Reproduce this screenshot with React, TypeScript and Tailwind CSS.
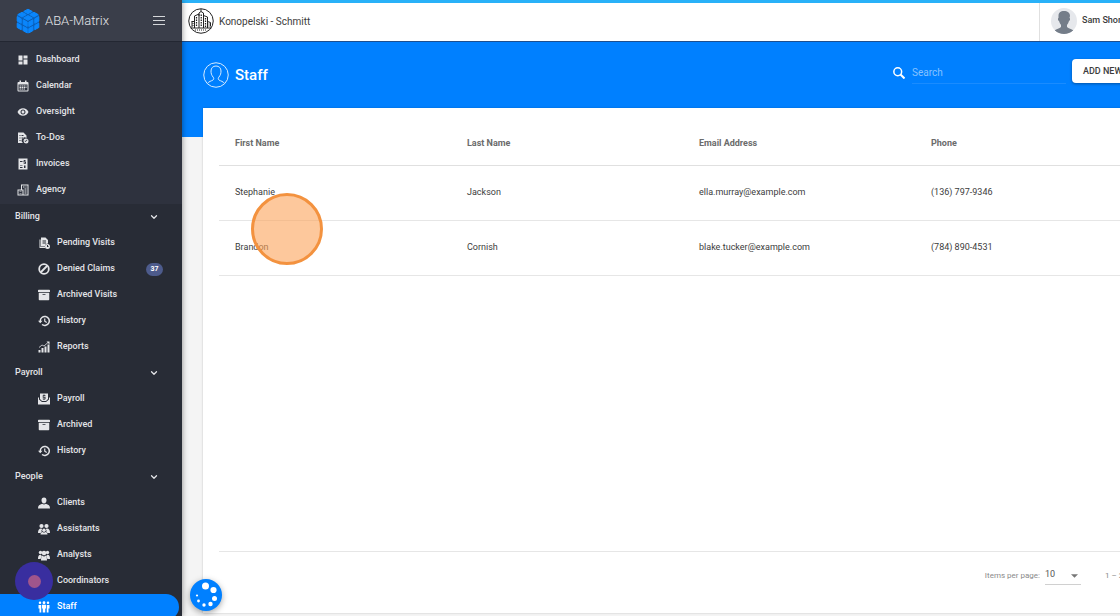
import type { ReactNode } from 'react';
import { useState } from 'react';
import { MdDashboard, MdVisibility } from 'react-icons/md';
import { FaArchive } from 'react-icons/fa';
import { ChevronDown } from 'lucide-react';

function Glyph({ children }: { children: ReactNode }) {
  return (
    <svg viewBox="0 0 24 24" className="size-3" fill="currentColor" aria-hidden="true">
      {children}
    </svg>
  );
}

const CalendarIcon = () => (
  <Glyph>
    <path
      fillRule="evenodd"
      d="M5 1h3v3h8V1h3v3h2a2 2 0 0 1 2 2v15a2 2 0 0 1-2 2H3a2 2 0 0 1-2-2V6a2 2 0 0 1 2-2h2zM3 9v12h18V9z"
    />
    <path d="M5 11h3v2H5zM9 11h3v2H9zM13 11h3v2h-3zM17 11h2v2h-2zM5 14h3v2H5zM9 14h3v2H9zM13 14h3v2h-3zM17 14h2v2h-2zM5 17h3v2H5zM9 17h3v2H9zM13 17h3v2h-3z" />
  </Glyph>
);

const TodoIcon = () => (
  <Glyph>
    <path
      fillRule="evenodd"
      d="M2 1h11l6 6v5a6 6 0 0 0-7 10H2zM5 6v2h2V6zm0 5v2h2v-2zm0 5v2h2v-2zM9 6v2h4V6zm0 5v2h4v-2z"
    />
    <path fillRule="evenodd" d="M18 13a5 5 0 1 1 0 10 5 5 0 0 1 0-10zm-1 7 4-4-1-1-3 3-1-1-1 1z" />
  </Glyph>
);

const InvoiceIcon = () => (
  <Glyph>
    <path
      fillRule="evenodd"
      d="M3 1h18v22H3zM6 6v2h5V6zm8-2v1h-1v4h3v1h-3v1h2v1h2v-1h1V8h-3V7h3V5h-2V4zM6 15v1h5v-1zm0 3v2h5v-2zm8-3v5h3v-5z"
    />
  </Glyph>
);

const AgencyIcon = () => (
  <Glyph>
    <path
      fillRule="evenodd"
      d="M8 1h15v22H1V11h7zM10 3v8h3v10h8V3zM3 13v8h8v-8z"
    />
    <path d="M12 5h3v2h-3zM17 5h2v2h-2zM15 9h4v2h-4zM15 13h4v2h-4zM15 17h4v2h-4zM5 15h4v1H5zM5 18h4v1H5z" />
  </Glyph>
);

const PendingIcon = () => (
  <Glyph>
    <path d="M3 5h2v15h9v2H3z" />
    <path fillRule="evenodd" d="M6 1h9l5 5v7a6 6 0 0 0-6 6H6zM9 7v2h7V7zm0 4v2h7v-2z" />
    <path fillRule="evenodd" d="M19 14a5 5 0 1 1 0 10 5 5 0 0 1 0-10zm-1 2v4h4v-1h-2v-3z" />
  </Glyph>
);

const DeniedIcon = () => (
  <svg viewBox="0 0 24 24" className="size-3" fill="none" stroke="currentColor" strokeWidth="3.6" aria-hidden="true">
    <circle cx="12" cy="12" r="9.6" />
    <path d="M18.5 5.5l-13 13" />
  </svg>
);

const HistoryIcon = () => (
  <svg viewBox="0 0 24 24" className="size-3" fill="none" stroke="currentColor" strokeWidth="3" aria-hidden="true">
    <path d="M4.500 13V12a9 9 0 1 1 3.500 7" />
    <path d="M13.500 7v5.500l4 2.500" strokeWidth="2.400" />
    <path d="M0 11.500h9L4.500 16.500z" fill="currentColor" stroke="none" />
  </svg>
);

const ReportsIcon = () => (
  <Glyph>
    <path d="M1 18h4v5H1zM7 14h4v9H7zM13 11h4v12h-4zM19 7h4v16h-4z" />
    <path d="M2 13l6-5 4 2 8-7" fill="none" stroke="currentColor" strokeWidth="1.6" />
    <path d="M17 1h6v6z" />
  </Glyph>
);

const PayrollIcon = () => (
  <Glyph>
    <path
      fillRule="evenodd"
      d="M4 1h16v11l-4 4H8l-4-4zM11 3v1.500H9.500v5h4V11h-4v1.500H11V14h2v-1.500h2V8h-4V6.500h4v-2h-2V3z"
    />
    <path d="M0 10l2-2v5l6 5h8l6-5V8l2 2v13H0z" />
  </Glyph>
);

const PersonIcon = () => (
  <Glyph>
    <path d="M12 1c3.500 0 5 2.500 5 5.500S15 13 12 13 7 9.500 7 6.500 8.500 1 12 1zM0 23c0-6 3-8 8.500-9.500a6 6 0 0 0 7 0C21 15 24 17 24 23z" />
  </Glyph>
);

const AssistantsIcon = () => (
  <Glyph>
    <circle cx="7" cy="6" r="4.200" />
    <circle cx="17" cy="6" r="4.200" />
    <path d="M0 20c0-6 2-9 6-9 1.500 0 2 .5 2.500 1a5 5 0 0 0-1 6L5 20zM24 20c0-6-2-9-6-9-1.500 0-2 .5-2.500 1a5 5 0 0 1 1 6l2.500 2z" />
    <circle cx="12" cy="14.500" r="3.400" />
    <path d="M5 23c0-3 2-4.500 4.500-5l2.500 1.500 2.500-1.500c2.500.5 4.500 2 4.500 5z" />
  </Glyph>
);

const AnalystsIcon = () => (
  <Glyph>
    <circle cx="5" cy="7" r="3.400" />
    <circle cx="19" cy="7" r="3.400" />
    <circle cx="12" cy="8" r="4.500" />
    <path d="M0 20c0-5 1-8.500 5-8.500l3 2.500-3 6zM24 20c0-5-1-8.500-5-8.500L16 14l3 6z" />
    <path d="M6 23c0-6 1-9 4-10l2 3 2-3c3 1 4 4 4 10z" />
  </Glyph>
);

const StaffIcon = () => (
  <Glyph>
    <circle cx="4" cy="3.500" r="2.500" />
    <circle cx="12" cy="3.500" r="2.800" />
    <circle cx="20" cy="3.500" r="2.500" />
    <path d="M1 8h5.500v15H3v-8H1zM8 7.500h8V15h-1.500v8h-5v-8H8zM17.500 8H23v7h-2v8h-3.500z" />
  </Glyph>
);

const Logo = () => (
  <svg viewBox="0 0 24 26" className="h-[26px] w-6" aria-hidden="true">
    <path d="M12 1l11 6v12.500L12 25.500 1 19.500V7z" fill="#0a5fb8" />
    <g fill="#0b86fb" stroke="#0b86fb" strokeWidth="1" strokeLinejoin="round">
      <path d="M12 1.200l4.200 2.200-4.200 2.300-4.200-2.300zM6 4.300l4.300 2.300L6 9 1.800 6.600zM18 4.300l4.200 2.300L18 9l-4.300-2.400zM12 7.600l4.300 2.300-4.300 2.400-4.300-2.400z" />
      <path d="M1.200 8.600l4 2.200v4.500l-4-2.200zM7.200 11.800l4 2.200v4.500l-4-2.200zM1.200 15.200l4 2.200v4.300l-4-2.200zM7.200 18.400l4 2.200v4.300l-4-2.200z" />
      <path d="M22.800 8.600l-4 2.200v4.500l4-2.200zM16.800 11.800l-4 2.200v4.500l4-2.200zM22.800 15.200l-4 2.200v4.300l4-2.200zM16.800 18.400l-4 2.200v4.300l4-2.200z" />
    </g>
  </svg>
);

const CompanyIcon = () => (
  <svg viewBox="0 0 52 52" className="size-[26px]" fill="none" stroke="#222" strokeWidth="2" aria-hidden="true">
    <circle cx="26" cy="26" r="24.500" />
    <path d="M5 40h42M13 40V16l9-4v28M22 16V10l4-3 5 3v30M31 15l8 3v22M26 2v5M7 27h6M39 27l6 2v8M8 27v11" />
    <path d="M17 18v20M26.500 13v24M35 20v18" strokeDasharray="3 2" strokeWidth="2.500" />
    <path d="M10 30v8M42 31v7M14 44h24" strokeDasharray="2 2" />
  </svg>
);

const StaffHeadingIcon = () => (
  <svg viewBox="0 0 52 52" className="size-[26px]" fill="none" stroke="#d7ecff" strokeWidth="2" aria-hidden="true">
    <circle cx="26" cy="26" r="24.500" />
    <path d="M9 43c2-4 8-5 11-7 2-1 2-4 0-6-3-4-4-7-4-12 0-6 4-10 10-10s10 4 10 10c0 5-1 8-4 12-2 2-2 5 0 6 3 2 9 3 11 7" />
  </svg>
);

const Avatar = () => (
  <svg viewBox="0 0 52 52" className="size-[26px] rounded-full bg-[#e6e8ec]" fill="#747d89" aria-hidden="true">
    <path d="M15 16c0-7 4-10 11-10s12 3 12 10l-1 4c2 0 1 6-1 6-1 4-3 6-4 8v4c3 4 9 3 13 7a26 26 0 0 1-38 0c4-4 10-3 13-7v-4c-1-2-3-4-4-8-2 0-3-6-1-6z" />
  </svg>
);

type Item = { label: string; icon: ReactNode; badge?: number; active?: boolean };

const mainItems: Item[] = [
  { label: 'Dashboard', icon: <MdDashboard className="size-3" /> },
  { label: 'Calendar', icon: <CalendarIcon /> },
  { label: 'Oversight', icon: <MdVisibility className="size-3" /> },
  { label: 'To-Dos', icon: <TodoIcon /> },
  { label: 'Invoices', icon: <InvoiceIcon /> },
  { label: 'Agency', icon: <AgencyIcon /> },
];

const groups: { title: string; items: Item[] }[] = [
  {
    title: 'Billing',
    items: [
      { label: 'Pending Visits', icon: <PendingIcon /> },
      { label: 'Denied Claims', icon: <DeniedIcon />, badge: 37 },
      { label: 'Archived Visits', icon: <FaArchive className="size-3" /> },
      { label: 'History', icon: <HistoryIcon /> },
      { label: 'Reports', icon: <ReportsIcon /> },
    ],
  },
  {
    title: 'Payroll',
    items: [
      { label: 'Payroll', icon: <PayrollIcon /> },
      { label: 'Archived', icon: <FaArchive className="size-3" /> },
      { label: 'History', icon: <HistoryIcon /> },
    ],
  },
  {
    title: 'People',
    items: [
      { label: 'Clients', icon: <PersonIcon /> },
      { label: 'Assistants', icon: <AssistantsIcon /> },
      { label: 'Analysts', icon: <AnalystsIcon /> },
      { label: 'Coordinators', icon: <PersonIcon /> },
      { label: 'Staff', icon: <StaffIcon />, active: true },
    ],
  },
];

const people = [
  { first: 'Stephanie', last: 'Jackson', email: 'ella.murray@example.com', phone: '(136) 797-9346' },
  { first: 'Brandon', last: 'Cornish', email: 'blake.tucker@example.com', phone: '(784) 890-4531' },
];

function NavLink({ item, nested }: { item: Item; nested?: boolean }) {
  return (
    <li>
      <a
        href="#"
        aria-current={item.active ? 'page' : undefined}
        className={`mr-[3px] flex h-[26px] items-center rounded-r-full pr-4 ${nested ? 'pl-[38px]' : 'pl-[17px]'} ${
          item.active ? 'bg-[#0080ff] text-white' : ''
        }`}
      >
        {item.icon}
        <span className="ml-[7px] flex-1">{item.label}</span>
        {item.badge && (
          <span className="flex h-[13px] w-[17px] items-center justify-center rounded-full bg-[#4d5b8c] text-[7px] font-bold text-white">
            {item.badge}
          </span>
        )}
      </a>
    </li>
  );
}

function NavGroup({ title, items }: { title: string; items: Item[] }) {
  const [open, setOpen] = useState(true);
  return (
    <section>
      <button
        type="button"
        aria-expanded={open}
        onClick={() => setOpen(!open)}
        className="flex h-[26px] w-full items-center justify-between pr-[23px] pl-[15px]"
      >
        {title}
        <ChevronDown className="size-[10px]" strokeWidth={3} />
      </button>
      {open && (
        <ul>
          {items.map((item) => (
            <NavLink key={item.label} item={item} nested />
          ))}
        </ul>
      )}
    </section>
  );
}

function Sidebar() {
  return (
    <aside className="relative z-10 flex w-[182px] shrink-0 flex-col overflow-hidden bg-[#282c36] text-[9px] font-medium text-[#e4e5e8] shadow-[0_0_6px_rgba(0,0,0,0.45)]">
      <div className="flex h-[42px] shrink-0 items-center border-b border-[#232732] bg-[#3a3e4a] pr-[17px] pl-4">
        <Logo />
        <span className="ml-[5px] flex-1 text-[13px] font-light">ABA-Matrix</span>
        <button type="button" aria-label="Toggle menu" className="flex w-3 flex-col gap-[3px]">
          <span className="h-px bg-[#d5d7da]" />
          <span className="h-px bg-[#d5d7da]" />
          <span className="h-px bg-[#d5d7da]" />
        </button>
      </div>
      <nav aria-label="Main">
        <ul className="bg-[#2e323e] pt-[5px] pb-px">
          {mainItems.map((item) => (
            <NavLink key={item.label} item={item} />
          ))}
        </ul>
        {groups.map((group) => (
          <NavGroup key={group.title} {...group} />
        ))}
      </nav>
      <div className="absolute top-[562px] left-[15px] flex size-[38px] items-center justify-center rounded-full bg-[#392e9f]">
        <span className="size-[13px] rounded-full bg-[#a0558c]" />
      </div>
    </aside>
  );
}

export default function App() {
  return (
    <div className="relative flex h-screen overflow-hidden bg-[#f4f4f4] font-[Roboto,sans-serif] text-[9px] text-[#3c3c3c]">
      <Sidebar />
      <main className="min-w-0 flex-1 overflow-hidden">
        <div className="flex h-full w-[calc(100%+64px)] flex-col">
          <header className="flex h-[42px] shrink-0 items-center border-t-3 border-b border-t-[#29b1f8] border-b-[#1d4f8f] bg-white pl-[6px]">
            <div className="flex flex-1 items-center gap-[5px] pb-[2px] text-[10px]">
              <CompanyIcon />
              Konopelski - Schmitt
            </div>
            <button
              type="button"
              className="flex w-[145px] items-center gap-[5px] self-stretch border-l border-[#e0e0e0] pb-[2px] pl-[11px] font-medium"
            >
              <Avatar />
              Sam Short
            </button>
          </header>

          <div className="flex h-[95px] shrink-0 items-start bg-[#0080ff] pt-4 pr-[21px] pl-[21px]">
            <div className="mt-1 flex items-center gap-[6px] text-white">
              <StaffHeadingIcon />
              <h1 className="text-[15px] font-medium">Staff</h1>
            </div>
            <label className="mt-1 ml-auto flex items-center">
              <svg viewBox="0 0 24 24" className="size-3" fill="none" stroke="#fff" strokeWidth="3" aria-hidden="true">
                <circle cx="9.500" cy="9.500" r="7.800" />
                <path d="M15 15l8 8" strokeWidth="4" />
              </svg>
              <input
                type="search"
                aria-label="Search"
                placeholder="Search"
                className="ml-[7px] h-[22px] w-[154px] border-b border-[#1a8cff] bg-transparent text-[10px] text-white outline-none placeholder:text-[#86c2ff]"
              />
            </label>
            <button
              type="button"
              className="mt-px ml-[6px] h-6 w-[91px] rounded-sm bg-white pt-px pl-[11px] text-left font-medium whitespace-nowrap shadow-[0_1px_3px_rgba(0,0,0,0.35)]"
            >
              ADD NEW STAFF
            </button>
          </div>

          <section className="relative mr-[21px] -mt-[29px] mb-[3px] ml-[21px] flex flex-1 flex-col bg-white px-4 shadow-[0_0_2px_rgba(0,0,0,0.2)]">
            <table className="w-full table-fixed text-left">
              <thead>
                <tr className="h-[57px] border-b border-[#e0e0e0] text-[#6b6b6b]">
                  {['First Name', 'Last Name', 'Email Address', 'Phone'].map((heading) => (
                    <th key={heading} scope="col" className="px-4 pt-[15px] font-bold">
                      {heading}
                    </th>
                  ))}
                </tr>
              </thead>
              <tbody>
                {people.map((person) => (
                  <tr key={person.email} className="h-[55px] border-b border-[#e6e6e6]">
                    <td className="px-4">{person.first}</td>
                    <td className="px-4">{person.last}</td>
                    <td className="px-4">{person.email}</td>
                    <td className="px-4">{person.phone}</td>
                  </tr>
                ))}
              </tbody>
            </table>
            <footer className="mt-auto flex h-[62px] items-start justify-end border-t border-[#e6e6e6] pt-[14px] pr-2 text-[8px] text-[#8a8a8a]">
              <label htmlFor="page-size" className="pt-1">
                Items per page:
              </label>
              <span className="relative ml-[5px] flex items-center">
                <select
                  id="page-size"
                  defaultValue="10"
                  className="h-[19px] w-9 appearance-none border-b border-[#d0d0d0] text-[9px] text-[#555]"
                >
                  <option>10</option>
                  <option>25</option>
                  <option>50</option>
                </select>
                <svg viewBox="0 0 8 4" className="pointer-events-none absolute right-[3px] h-[4px] w-[7px]" fill="#777" aria-hidden="true">
                  <path d="M0 0h8L4 4z" />
                </svg>
              </span>
              <span className="ml-6 pt-1">1 – 2 of 2</span>
            </footer>
          </section>
        </div>
      </main>

      <div className="pointer-events-none absolute top-[193px] left-[251px] z-20 size-[72px] rounded-full border-3 border-[#f3923f] bg-[#fba35a]/60" />

      <button
        type="button"
        aria-label="Open support"
        className="absolute top-[579px] left-[190px] z-20 size-8 rounded-full bg-[#0080ff] shadow-[0_2px_6px_rgba(0,0,0,0.35)]"
      >
        <svg viewBox="0 0 32 32" className="size-8" fill="#fff" aria-hidden="true">
          <circle cx="15.500" cy="7" r="3.500" />
          <circle cx="23.500" cy="11" r="3.100" />
          <circle cx="24.500" cy="19.500" r="2.500" />
          <circle cx="20.500" cy="25" r="2.200" />
          <circle cx="14" cy="26" r="1.700" />
          <circle cx="8.500" cy="22" r="1.400" />
          <circle cx="7" cy="16.500" r="1.100" />
        </svg>
      </button>
    </div>
  );
}
